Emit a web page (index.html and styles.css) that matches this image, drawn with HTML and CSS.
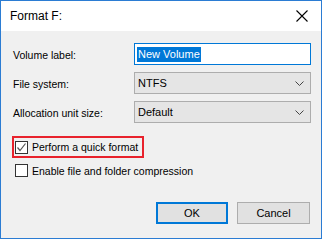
FILE: index.html
```html
<!DOCTYPE html>
<html>
<head>
<meta charset="utf-8">
<link rel="stylesheet" href="styles.css">
</head>
<body>
<div class="window">
  <div class="titlebar">
    <span class="title">Format F:</span>
    <svg class="close" width="12" height="12" viewBox="0 0 12 12"><path d="M0.5 0.5 L11.5 11.5 M11.5 0.5 L0.5 11.5" stroke="#000" stroke-width="1.1" fill="none"/></svg>
  </div>
  <div class="content">
    <div class="form">
      <label class="lbl">Volume label:</label>
      <div class="input"><span class="sel">New Volume</span></div>
      <label class="lbl">File system:</label>
      <div class="select"><span>NTFS</span><svg width="9" height="5" viewBox="0 0 9 5"><path d="M0.5 0.5 L4.5 4.5 L8.5 0.5" stroke="#444" fill="none"/></svg></div>
      <label class="lbl">Allocation unit size:</label>
      <div class="select"><span>Default</span><svg width="9" height="5" viewBox="0 0 9 5"><path d="M0.5 0.5 L4.5 4.5 L8.5 0.5" stroke="#444" fill="none"/></svg></div>
    </div>
    <div class="checks">
      <div class="check highlight">
        <span class="box"><svg width="11" height="11" viewBox="0 0 11 11"><path d="M1.5 5.5 L4 8.5 L9.5 1.5" stroke="#555" stroke-width="1.2" fill="none"/></svg></span>
        <span>Perform a quick format</span>
      </div>
      <div class="check">
        <span class="box"></span>
        <span>Enable file and folder compression</span>
      </div>
    </div>
    <div class="buttons">
      <button class="btn default">OK</button>
      <button class="btn">Cancel</button>
    </div>
  </div>
</div>
</body>
</html>
```
FILE: styles.css
```css
* { box-sizing: border-box; }
body { margin: 0; font-family: "Liberation Sans", Arial, sans-serif; font-size: 10.5px; color: #000; }
.window {
  width: 322px; height: 239px;
  border: 1px solid #2b7cd3;
  background: #f0f0f0;
  display: flex; flex-direction: column;
}
.titlebar {
  height: 30px; background: #fff;
  display: flex; align-items: center; justify-content: space-between;
  padding: 0 13px 0 9px;
}
.title { font-size: 12px; }
.content {
  flex: 1;
  display: flex; flex-direction: column;
  padding: 12px 10px 14px 12px;
}
.form {
  display: grid;
  grid-template-columns: 121px 1fr;
  grid-auto-rows: 22px;
  row-gap: 7px;
  align-items: center;
}
.lbl { padding-top: 1px; white-space: nowrap; }
.input {
  height: 22px; border: 1px solid #0078d7; background: #fff;
  display: flex; align-items: center; padding-left: 2px;
}
.sel { background: #0078d7; color: #fff; padding: 1px 1px; line-height: 13px; font-size: 11px; }
.select {
  height: 22px; border: 1px solid #adadad; background: #e5e5e5;
  display: flex; align-items: center; justify-content: space-between;
  padding: 0 6px 0 3px;
  font-size: 11px;
}
.checks { margin-top: 13px; display: flex; flex-direction: column; gap: 5px; }
.check { display: flex; align-items: center; gap: 4px; height: 15px; padding-left: 2px; white-space: nowrap; }
.check.highlight {
  width: 132px; height: 22px;
  margin-left: -1px;
  border: 2px solid #e8222c;
  padding-left: 1px;
}
.box {
  width: 13px; height: 13px; border: 1px solid #333; background: #fff;
  display: flex; align-items: center; justify-content: center;
  flex: none;
}
.buttons {
  margin-top: auto;
  display: flex; justify-content: flex-end; gap: 9px;
  padding-right: 1px;
}
.btn {
  font-family: inherit; font-size: 11px;
  width: 73px; height: 22px;
  background: #e1e1e1; border: 1px solid #adadad;
  padding: 0; color: #000;
}
.btn.default { width: 72px; border: 2px solid #0078d7; }
```
